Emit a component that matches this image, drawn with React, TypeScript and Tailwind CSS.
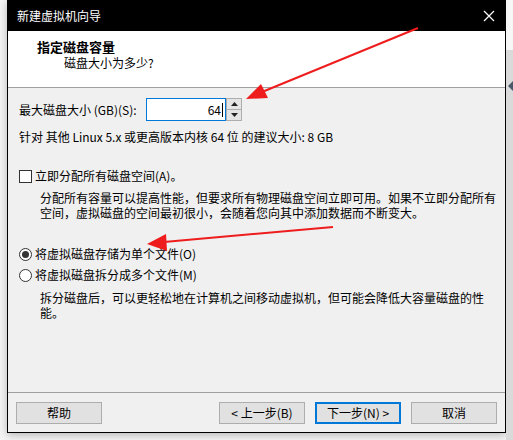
import React from "react";

const font = "font-['Noto_Sans_CJK_SC','Noto_Sans',sans-serif]";

function Btn({ label, primary }: { label: string; primary?: boolean }) {
  return (
    <div
      className={`w-[86px] h-[22px] flex items-center justify-center text-[12px] leading-none text-black bg-[#e1e1e1] ${
        primary ? "border-2 border-[#0078d7]" : "border border-[#adadad]"
      }`}
    >
      {label}
    </div>
  );
}

function Arrows() {
  return (
    <svg className="absolute inset-0 pointer-events-none" width="513" height="440" viewBox="0 0 513 440">
      <line x1="418" y1="28" x2="262" y2="92" stroke="#ee1c1c" strokeWidth="2" />
      <polygon points="246,99 261,84 268,98" fill="#ee1c1c" />
      <line x1="333" y1="227" x2="164" y2="242" stroke="#ee1c1c" strokeWidth="2" />
      <polygon points="147,244 166,234 167,251" fill="#ee1c1c" />
    </svg>
  );
}

export default function App() {
  return (
    <div className={`relative w-[513px] h-[440px] flex bg-[#f4f4f4] ${font} overflow-hidden`}>
      {/* dialog window */}
      <div className="ml-[7px] w-[499px] h-[433px] flex flex-col bg-[#f0f0f0] border-x border-b border-black shadow-[0_2px_8px_rgba(0,0,0,0.25)]">
        {/* title bar */}
        <div className="h-[31px] bg-black flex items-center justify-between pl-[9px] pr-[10px] text-white">
          <span className="text-[12px] leading-none">新建虚拟机向导</span>
          <svg width="12" height="12" viewBox="0 0 12 12">
            <path d="M1 1 L11 11 M11 1 L1 11" stroke="#fff" strokeWidth="1.2" />
          </svg>
        </div>
        {/* header */}
        <div className="h-[57px] bg-white border-b border-[#a0a0a0] pl-[29px] pt-[8px] text-black">
          <div className="text-[13px] font-bold leading-[16px]">指定磁盘容量</div>
          <div className="text-[12px] leading-[16px] pl-[27px]">磁盘大小为多少?</div>
        </div>
        {/* body */}
        <div className="flex-1 flex flex-col pl-[11px] pr-[10px] text-[12px] text-black whitespace-nowrap">
          <div className="mt-[10px] flex items-center h-[23px]">
            <span className="leading-none w-[127px]">最大磁盘大小 (GB)(S):</span>
            <div className="w-[80px] h-[23px] bg-white border border-[#0078d7] flex items-center justify-end pr-[2px]">
              <span className="leading-none">64</span>
              <span className="w-px h-[14px] bg-black ml-px" />
            </div>
            <div className="w-[16px] h-[23px] flex flex-col border border-[#adadad] bg-[#f0f0f0]">
              <div className="flex-1 flex items-center justify-center border-b border-[#adadad] bg-[#e5e5e5]">
                <svg width="7" height="4" viewBox="0 0 7 4"><path d="M0 4 L3.5 0 L7 4 Z" fill="#222" /></svg>
              </div>
              <div className="flex-1 flex items-center justify-center bg-[#e5e5e5]">
                <svg width="7" height="4" viewBox="0 0 7 4"><path d="M0 0 L3.5 4 L7 0 Z" fill="#222" /></svg>
              </div>
            </div>
          </div>
          <div className="mt-[8px] leading-[16px]">针对 其他 Linux 5.x 或更高版本内核 64 位 的建议大小: 8 GB</div>

          <div className="mt-[23px] flex items-center gap-[3px]">
            <div className="w-[13px] h-[13px] border border-[#333] bg-white" />
            <span className="leading-[16px]">立即分配所有磁盘空间(A)。</span>
          </div>
          <div className="mt-[6px] pl-[21px] leading-[15px]">
            <div>分配所有容量可以提高性能，但要求所有物理磁盘空间立即可用。如果不立即分配所有</div>
            <div>空间，虚拟磁盘的空间最初很小，会随着您向其中添加数据而不断变大。</div>
          </div>

          <div className="mt-[26px] flex items-center gap-[3px]">
            <div className="w-[13px] h-[13px] rounded-full border border-[#333] bg-white flex items-center justify-center">
              <div className="w-[7px] h-[7px] rounded-full bg-[#333]" />
            </div>
            <span className="leading-[16px]">将虚拟磁盘存储为单个文件(O)</span>
          </div>
          <div className="mt-[5px] flex items-center gap-[3px]">
            <div className="w-[13px] h-[13px] rounded-full border border-[#333] bg-white" />
            <span className="leading-[16px]">将虚拟磁盘拆分成多个文件(M)</span>
          </div>
          <div className="mt-[7px] pl-[21px] leading-[15px]">
            <div>拆分磁盘后，可以更轻松地在计算机之间移动虚拟机，但可能会降低大容量磁盘的性</div>
            <div>能。</div>
          </div>
        </div>
        {/* footer */}
        <div className="h-[40px] border-t border-[#a0a0a0] flex items-start pt-[9px] pl-[8px] pr-[8px]">
          <Btn label="帮助" />
          <div className="flex-1" />
          <div className="flex gap-[10px]">
            <Btn label="< 上一步(B)" />
            <Btn label="下一步(N) >" primary />
            <Btn label="取消" />
          </div>
        </div>
      </div>
      {/* background window edge on the right */}
      <div className="flex-1 flex flex-col">
        <div className="h-[50px] bg-[#f7f7f7]" />
        <div className="flex-1 bg-[#dadada] pt-[30px]">
          <div className="w-0 h-0 ml-[2px] border-y-[6px] border-y-transparent border-r-[6px] border-r-[#4a5a6a]" />
        </div>
      </div>
      <Arrows />
    </div>
  );
}
